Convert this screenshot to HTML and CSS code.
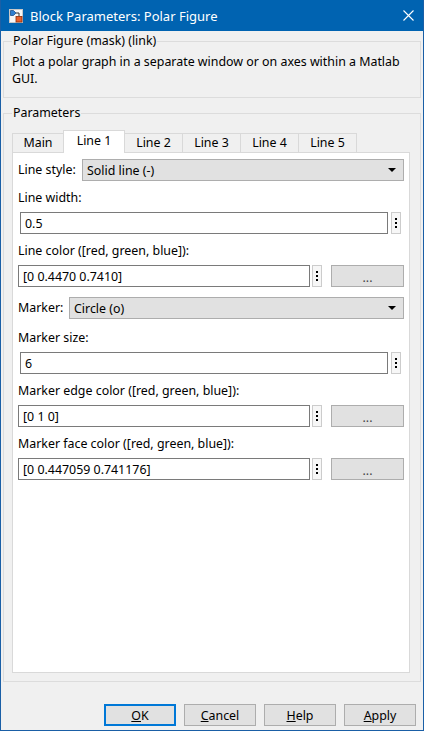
FILE: index.html
```html
<!DOCTYPE html>
<html lang="en">
<head>
    <meta charset="UTF-8">
    <title>Block Parameters: Polar Figure</title>
    <link rel="stylesheet" href="styles.css">
</head>
<body>
    <div class="window">
        <div class="titlebar">
            <svg class="app-icon" width="14" height="14" viewBox="0 0 14 14">
                <rect x="0.5" y="0.5" width="13" height="13" fill="#f7f7f7" stroke="#c8c8c8"/>
                <polygon points="1.5,1.5 4.5,1.5 7,4 4.5,6.5 1.5,6.5" fill="#2f7fd0" stroke="#1c4f8c" stroke-width="0.8"/>
                <polyline points="7,4 10,4 10,7.5" fill="none" stroke="#333" stroke-width="1"/>
                <rect x="7" y="7.5" width="6" height="5.5" fill="#e8602c" stroke="#8a2c0c" stroke-width="0.8"/>
            </svg>
            <span class="title">Block Parameters: Polar Figure</span>
            <svg class="close" width="11" height="11" viewBox="0 0 11 11">
                <path d="M0.5 0.5 L10.5 10.5 M10.5 0.5 L0.5 10.5" stroke="#fff" stroke-width="1.1"/>
            </svg>
        </div>

        <div class="content">
            <fieldset class="group group-mask">
                <legend>Polar Figure (mask) (link)</legend>
                <p class="description">Plot a polar graph in a separate window or on axes within a Matlab GUI.</p>
            </fieldset>

            <fieldset class="group group-params">
                <legend>Parameters</legend>
                <div class="tabs">
                    <div class="tab tab-main">Main</div>
                    <div class="tab tab-active">Line 1</div>
                    <div class="tab">Line 2</div>
                    <div class="tab">Line 3</div>
                    <div class="tab">Line 4</div>
                    <div class="tab">Line 5</div>
                </div>

                <div class="tab-panel">
                    <div class="select-row">
                        <span class="select-label label-style">Line style:</span>
                        <div class="select">
                            <span>Solid line (-)</span>
                            <span class="arrow"></span>
                        </div>
                    </div>

                    <div class="field-label">Line width:</div>
                    <div class="input-row wide">
                        <div class="input">0.5</div>
                        <div class="dots"><i></i><i></i><i></i></div>
                    </div>

                    <div class="field-label">Line color ([red, green, blue]):</div>
                    <div class="input-row color">
                        <div class="input">[0 0.4470 0.7410]</div>
                        <div class="dots"><i></i><i></i><i></i></div>
                        <div class="pick">...</div>
                    </div>

                    <div class="select-row marker-row">
                        <span class="select-label label-marker">Marker:</span>
                        <div class="select">
                            <span>Circle (o)</span>
                            <span class="arrow"></span>
                        </div>
                    </div>

                    <div class="field-label after-select">Marker size:</div>
                    <div class="input-row wide">
                        <div class="input">6</div>
                        <div class="dots"><i></i><i></i><i></i></div>
                    </div>

                    <div class="field-label">Marker edge color ([red, green, blue]):</div>
                    <div class="input-row color">
                        <div class="input">[0 1 0]</div>
                        <div class="dots"><i></i><i></i><i></i></div>
                        <div class="pick">...</div>
                    </div>

                    <div class="field-label">Marker face color ([red, green, blue]):</div>
                    <div class="input-row color">
                        <div class="input">[0 0.447059 0.741176]</div>
                        <div class="dots"><i></i><i></i><i></i></div>
                        <div class="pick">...</div>
                    </div>
                </div>
            </fieldset>

            <div class="buttons">
                <div class="btn btn-default"><u>O</u>K</div>
                <div class="btn"><u>C</u>ancel</div>
                <div class="btn"><u>H</u>elp</div>
                <div class="btn"><u>A</u>pply</div>
            </div>
        </div>
    </div>
</body>
</html>
```

FILE: styles.css
```css
* {
    box-sizing: border-box;
}

body {
    margin: 0;
    font-family: "Noto Sans", "Segoe UI", sans-serif;
    font-size: 12.4px;
    color: #000;
    background-color: #fff;
}

.window {
    width: 424px;
    height: 731px;
    display: flex;
    flex-direction: column;
    background-color: #f0f0f0;
    border: 1px solid #1a5fa6;
    border-top: none;
}

.titlebar {
    height: 31px;
    flex-shrink: 0;
    display: flex;
    align-items: center;
    padding-left: 8px;
    background-color: #0063b1;
    color: #fff;
}

.app-icon {
    margin-right: 7px;
}

.title {
    font-size: 13px;
    line-height: 16px;
}

.close {
    margin-left: auto;
    margin-right: 9px;
}

.content {
    flex: 1;
    display: flex;
    flex-direction: column;
    padding: 2px 2px 4px 2px;
    min-height: 0;
}

.group {
    margin: 0;
    border: 1px solid #dcdcdc;
    min-width: 0;
}

.group legend {
    padding: 0 1px;
    line-height: 16px;
}

.group-mask {
    padding: 4px 4px 10px 8px;
}

.description {
    margin: 0;
    line-height: 17px;
}

.group-params {
    flex: 1;
    display: flex;
    flex-direction: column;
    margin-top: 7px;
    padding: 9px 10px 8px 8px;
    min-height: 0;
}

/* tabs */
.tabs {
    display: flex;
    align-items: flex-end;
    height: 22px;
}

.tab {
    height: 19px;
    width: 59px;
    margin-left: -1px;
    display: flex;
    align-items: center;
    justify-content: center;
    border: 1px solid #d9d9d9;
    border-bottom: none;
    background-color: #f0f0f0;
    line-height: 16px;
}

.tab-main {
    width: 52px;
    margin-left: 0;
}

.tab-active {
    width: 62px;
    height: 23px;
    margin-bottom: -1px;
    padding-bottom: 2px;
    background-color: #fff;
    position: relative;
    z-index: 1;
}

.tab-panel {
    flex: 1;
    background-color: #fff;
    border: 1px solid #d9d9d9;
    padding: 6px 5px 0 5px;
}

/* rows */
.select-row {
    display: flex;
    align-items: center;
    height: 22px;
}

.select-label {
    flex-shrink: 0;
    line-height: 16px;
}

.label-style {
    width: 64px;
}

.label-marker {
    width: 51px;
}

.marker-row {
    margin-top: 10px;
}

.select {
    flex: 1;
    height: 22px;
    display: flex;
    align-items: center;
    justify-content: space-between;
    padding: 0 7px 0 4px;
    background-color: #e1e1e1;
    border: 1px solid #adadad;
}

.arrow {
    width: 0;
    height: 0;
    border-left: 4px solid transparent;
    border-right: 4px solid transparent;
    border-top: 4px solid #000;
}

.field-label {
    margin: 9px 0 6px 0;
    line-height: 16px;
}

.field-label.after-select {
    margin-top: 11px;
}

.input-row {
    display: flex;
    align-items: center;
    height: 22px;
}

.input {
    flex: 1;
    height: 22px;
    display: flex;
    align-items: center;
    padding-left: 4px;
    background-color: #fff;
    border: 1px solid #7a7a7a;
}

.input-row.wide {
    padding-left: 2px;
    padding-right: 3px;
}

.dots {
    width: 10px;
    height: 22px;
    margin-left: 2px;
    display: flex;
    flex-direction: column;
    align-items: center;
    justify-content: center;
    gap: 2px;
    background-color: #f7f7f7;
    border: 1px solid #cccccc;
}

.input-row.wide .dots {
    margin-left: 3px;
}

.dots i {
    width: 2px;
    height: 2px;
    background-color: #000;
}

.pick {
    width: 73px;
    height: 22px;
    margin-left: 9px;
    display: flex;
    align-items: center;
    justify-content: center;
    padding-top: 2px;
    color: #444;
    background-color: #e1e1e1;
    border: 1px solid #adadad;
}

/* dialog buttons */
.buttons {
    display: flex;
    justify-content: flex-end;
    gap: 8px;
    margin-top: 22px;
    padding-right: 5px;
}

.btn {
    width: 72px;
    height: 22px;
    display: flex;
    align-items: center;
    justify-content: center;
    background-color: #e1e1e1;
    border: 1px solid #adadad;
}

.btn-default {
    border: 2px solid #0078d7;
}
```
